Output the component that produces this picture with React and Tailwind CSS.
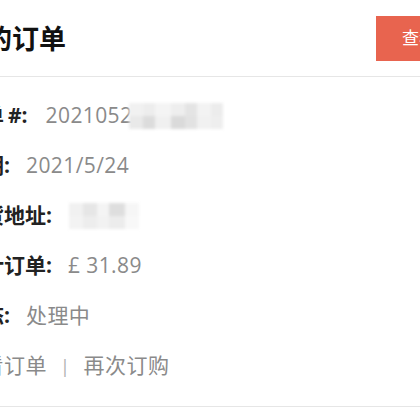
import React from "react";

const font = { fontFamily: '"Open Sans", "Noto Sans CJK SC", sans-serif' };

// pixelated/blurred block standing in for a hidden value
function Mosaic({ cells, className }) {
  return (
    <span className={`inline-flex h-[26px] blur-[1.5px] ${className}`}>
      {cells.map((c, i) => (
        <span key={i} className="h-full flex flex-col" style={{ width: c.w }}>
          <span className="h-1/2" style={{ background: c.top }} />
          <span className="h-1/2" style={{ background: c.bottom }} />
        </span>
      ))}
    </span>
  );
}

const orderCells = [
  { w: 14, top: "#f1f1f1", bottom: "#e9e9e9" },
  { w: 12, top: "#ededed", bottom: "#dcdcdc" },
  { w: 16, top: "#f4f4f4", bottom: "#f0f0f0" },
  { w: 14, top: "#eeeeee", bottom: "#dadada" },
  { w: 12, top: "#e4e4e4", bottom: "#e2e2e2" },
  { w: 14, top: "#f3f3f3", bottom: "#f1f1f1" },
  { w: 12, top: "#ececec", bottom: "#eeeeee" },
];

const addrCells = [
  { w: 14, top: "#f1f1f1", bottom: "#f3f3f3" },
  { w: 14, top: "#e6e6e6", bottom: "#ededed" },
  { w: 12, top: "#f4f4f4", bottom: "#f2f2f2" },
  { w: 16, top: "#dedede", bottom: "#ececec" },
  { w: 14, top: "#f6f6f6", bottom: "#f8f8f8" },
];

function Row({ label, gap = "ml-4", children }) {
  return (
    <div className="h-[50px] flex items-center whitespace-nowrap">
      <span className="font-bold text-[#222]">{label}</span>
      <span className={`${gap} text-[#8a8a8a] tracking-[0.4px] flex items-center`}>
        {children}
      </span>
    </div>
  );
}

export default function App() {
  return (
    <div className="w-[420px] h-[420px] overflow-hidden bg-white" style={font}>
      {/* header */}
      <div className="h-[77px] pt-[3px] flex items-center border-b border-[#e6e6e6]">
        <h1 className="-ml-[42px] text-[27px] font-bold text-[#111] whitespace-nowrap">
          我的订单
        </h1>
        <button className="ml-auto -mr-[104px] -mt-[3px] shrink-0 w-[148px] h-[45px] bg-[#e8644f] text-white text-[17px] text-left pl-[26px] whitespace-nowrap">
          查看所有订单
        </button>
      </div>

      {/* order info */}
      <div className="-ml-[38px] pt-[14px] pb-[15px] border-b border-[#e6e6e6] text-[21px]">
        <Row
          label={
            <>
              订单<span className="ml-[4px]">#:</span>
            </>
          }
          gap="ml-[18px]"
        >
          2021052
          <Mosaic cells={orderCells} className="-ml-[3px]" />
        </Row>
        <Row label="日期:">2021/5/24</Row>
        <Row label="收货地址:">
          <Mosaic cells={addrCells} className="ml-[1px]" />
        </Row>
        <Row label="合计订单:">£ 31.89</Row>
        <Row label="状态:">处理中</Row>
        <div className="h-[50px] flex items-center whitespace-nowrap text-[#8a8a8a] tracking-[0.5px] -ml-[1px]">
          <span>查看订单</span>
          <span className="mx-[13px] text-[#b0b0b0] text-[18px]">|</span>
          <span>再次订购</span>
        </div>
      </div>
    </div>
  );
}
